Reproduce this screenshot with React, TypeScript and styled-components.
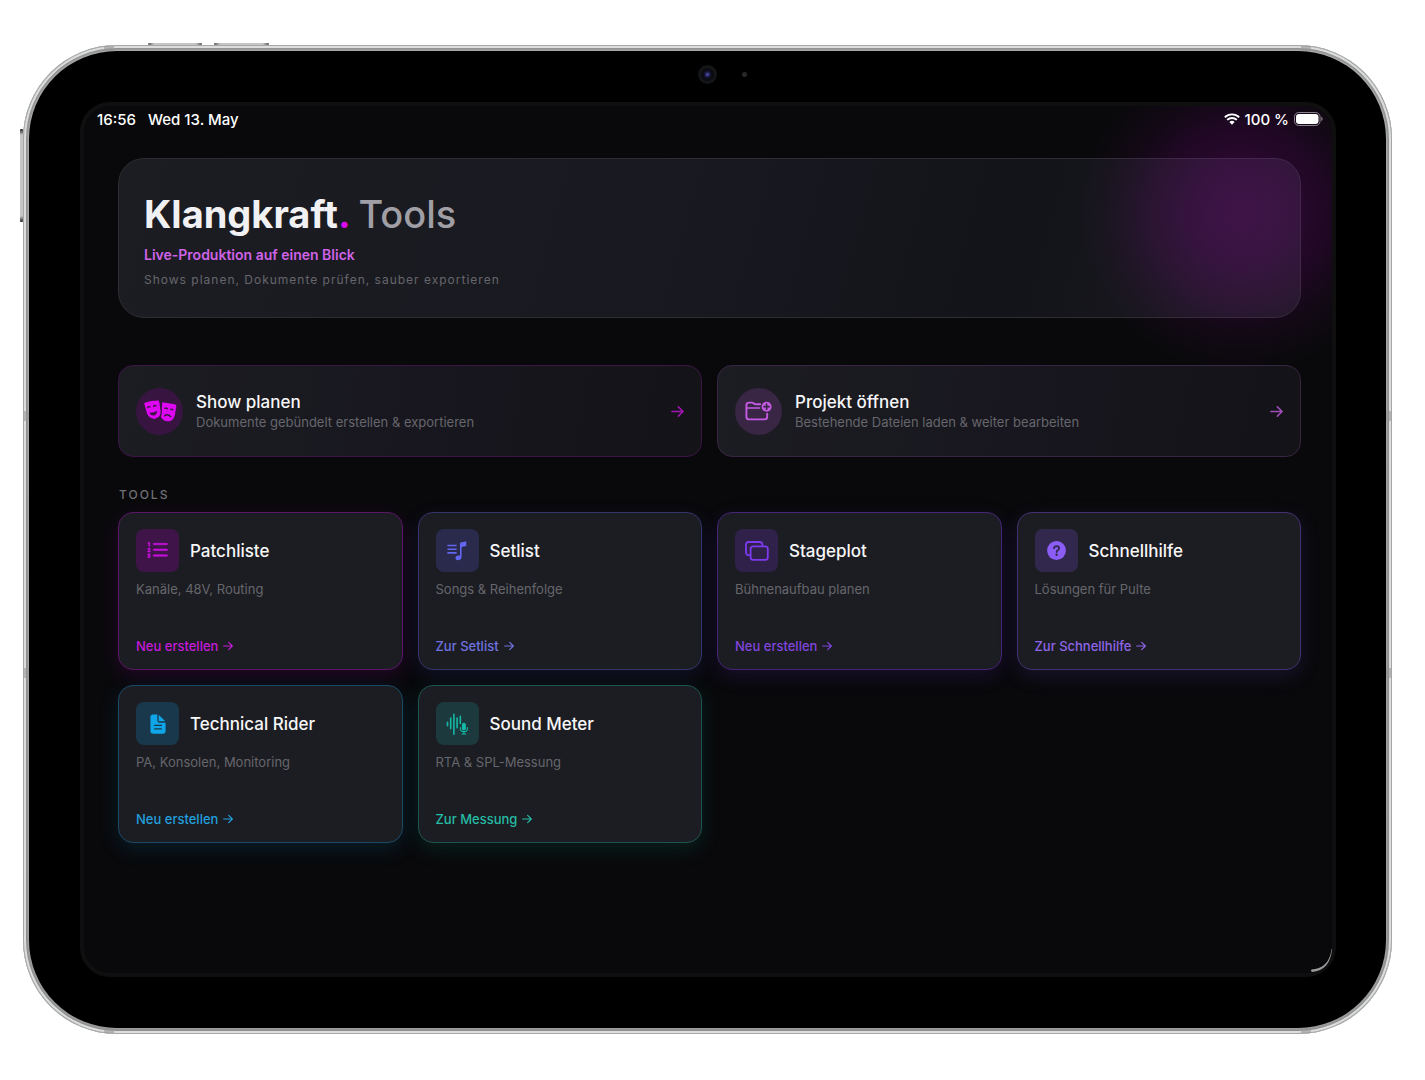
import React from "react";
import styled, { createGlobalStyle } from "styled-components";
import { BsListOl } from "react-icons/bs";
import { IoDocumentText } from "react-icons/io5";

const GlobalStyle = createGlobalStyle`
  *, *::before, *::after { box-sizing: border-box; }
  body { margin: 0; background: #fff; }
  h1, h2, h3, p { margin: 0; font-weight: inherit; }
`;

const Page = styled.div`
  min-height: 100vh;
  display: flex;
  padding: 45px 33px 46px 23px;
  font-family: Inter, "Liberation Sans", sans-serif;
  color: #fff;
`;

const Tablet = styled.div`
  position: relative;
  flex: 1;
  display: flex;
  padding: 6px;
  border-radius: 94px;
  background: linear-gradient(#b9b9b9, #a8a8a8);
  box-shadow:
    inset 0 0 0 1px #a5a7a7,
    inset 0 0 0 3px #dcdedd,
    inset 0 0 3px 5px #8c8c8c;
`;

const SideKey = styled.span<{ $x: number; $y: number; $w: number; $h: number }>`
  position: absolute;
  left: ${(p) => p.$x}px;
  top: ${(p) => p.$y}px;
  width: ${(p) => p.$w}px;
  height: ${(p) => p.$h}px;
  border-radius: 1px;
  background: ${(p) =>
    p.$w > p.$h
      ? "linear-gradient(90deg, #555, #c6c6c6 6px, #c6c6c6 calc(100% - 6px), #555)"
      : "linear-gradient(#222, #c6c6c6 6px, #c6c6c6 calc(100% - 6px), #222)"};
`;

const SeamH = styled.span<{ $edge: "top" | "bottom"; $side: "left" | "right" }>`
  position: absolute;
  ${(p) => p.$edge}: 1px;
  ${(p) => p.$side}: 81px;
  width: 10px;
  height: 5px;
  background: rgba(150, 150, 150, 0.6);
`;

const SeamV = styled.span<{ $side: "left" | "right"; $at: string }>`
  position: absolute;
  ${(p) => p.$side}: 1px;
  top: ${(p) => p.$at};
  width: 5px;
  height: 10px;
  background: rgba(150, 150, 150, 0.6);
`;

const Bezel = styled.div`
  position: relative;
  flex: 1;
  display: flex;
  padding: 51px 50px 51px 51px;
  border-radius: 88px;
  background: #000;
`;

const Camera = styled.span`
  position: absolute;
  top: 14px;
  left: 50%;
  width: 19px;
  height: 19px;
  margin-left: -10px;
  border-radius: 50%;
  background: radial-gradient(circle, #5a5ab0 0, #23235c 2px, #0b0b18 4px, #0c0d10 6px, #16181a 8px, #121314 9px);
`;

const Sensor = styled.span`
  position: absolute;
  top: 21px;
  left: 50%;
  width: 5px;
  height: 5px;
  margin-left: 34px;
  border-radius: 50%;
  background: #26282a;
`;

const Screen = styled.div`
  position: relative;
  flex: 1;
  display: flex;
  flex-direction: column;
  overflow: hidden;
  border: 4px solid #0f0f10;
  border-radius: 30px;
  background: #09090b;
`;

const Glow = styled.div`
  position: absolute;
  top: -53px;
  right: -68px;
  width: 320px;
  height: 320px;
  pointer-events: none;
  background: radial-gradient(
    circle closest-side,
    rgba(212, 0, 232, 0.2) 0,
    rgba(212, 0, 232, 0.17) 30%,
    rgba(212, 0, 232, 0.11) 54%,
    rgba(212, 0, 232, 0.04) 78%,
    rgba(212, 0, 232, 0) 100%
  );
`;

const StatusBar = styled.header`
  position: relative;
  z-index: 1;
  display: flex;
  justify-content: space-between;
  align-items: center;
  height: 26px;
  padding: 0 9px 0 13px;
  font-size: 15px;
  font-weight: 450;
`;

const StatusGroup = styled.div<{ $gap: number }>`
  display: flex;
  align-items: center;
  gap: ${(p) => p.$gap}px;
`;

const Content = styled.main`
  flex: 1;
  padding: 26px 31px 40px 34px;
`;

const Hero = styled.section`
  height: 160px;
  padding: 31px 25px 0;
  border: 1px solid #2d2d32;
  border-radius: 26px;
  background: linear-gradient(105deg, #1c1d22, #181820 50%, #131419 75%, #1b1a21);
`;

const HeroTitle = styled.h1`
  font-size: 38px;
  line-height: 48px;
  font-weight: 700;
  color: #f1f1f4;
`;

const Dot = styled.span`
  color: #d90bf0;
`;

const Thin = styled.span`
  font-weight: 500;
  color: #a09fa5;
`;

const Tagline = styled.p`
  margin-top: 6px;
  font-size: 14px;
  line-height: 22px;
  font-weight: 600;
  color: #cf63e8;
`;

const HeroNote = styled.p`
  margin-top: 4px;
  font-size: 12px;
  line-height: 20px;
  letter-spacing: 1px;
  color: #66666c;
`;

const QuickGrid = styled.section`
  display: grid;
  grid-template-columns: 1fr 1fr;
  gap: 15px;
  margin-top: 47px;
`;

const QuickCard = styled.button<{ $line: string }>`
  display: flex;
  align-items: center;
  gap: 13px;
  height: 92px;
  padding: 0 17px;
  border: 1px solid ${(p) => p.$line};
  border-radius: 15px;
  background: linear-gradient(100deg, #1c1d22, #18171f 50%, #131318);
  color: inherit;
  font: inherit;
  text-align: left;
`;

const RoundIcon = styled.span<{ $bg: string; $fg: string }>`
  flex: none;
  display: grid;
  place-items: center;
  width: 47px;
  height: 47px;
  border-radius: 50%;
  background: ${(p) => p.$bg};
  color: ${(p) => p.$fg};
`;

const QuickText = styled.span`
  flex: 1;
  display: flex;
  flex-direction: column;
`;

const CardTitle = styled.span`
  font-size: 17px;
  line-height: 22px;
  font-weight: 500;
  color: #f7f7f8;
`;

const Muted = styled.span`
  font-size: 13px;
  line-height: 18px;
  color: #66666c;
`;

const SectionLabel = styled.h2`
  margin: 28px 0 8px 1px;
  font-size: 12px;
  line-height: 19px;
  font-weight: 500;
  letter-spacing: 2px;
  color: #707075;
`;

const ToolGrid = styled.section`
  display: grid;
  grid-template-columns: repeat(4, 1fr);
  gap: 15px;
`;

const ToolCard = styled.article<{ $line: string; $glow: string }>`
  display: flex;
  flex-direction: column;
  height: 158px;
  padding: 16px 17px 13px;
  border: 1px solid ${(p) => p.$line};
  border-radius: 15px;
  background: #1c1d22;
  box-shadow: 0 6px 20px ${(p) => p.$glow};
`;

const ToolHead = styled.div`
  display: flex;
  align-items: center;
  gap: 11px;
  margin-bottom: 8px;
`;

const SquareIcon = styled.span<{ $bg: string; $fg: string }>`
  display: grid;
  place-items: center;
  width: 43px;
  height: 43px;
  border-radius: 8px;
  background: ${(p) => p.$bg};
  color: ${(p) => p.$fg};
`;

const ToolLink = styled.a<{ $fg: string }>`
  display: flex;
  align-items: center;
  gap: 5px;
  margin-top: auto;
  font-size: 13px;
  line-height: 20px;
  font-weight: 500;
  text-decoration: none;
  color: ${(p) => p.$fg};
`;

const CornerMark = styled.svg`
  position: absolute;
  right: 54px;
  bottom: 55px;
`;

const Arrow = ({ size = 10, color = "currentColor" }) => (
  <svg width={size} height={size} viewBox="0 0 12 12" fill="none" stroke={color} strokeWidth="1.4" strokeLinecap="round" strokeLinejoin="round" aria-hidden="true">
    <path d="M.8 6h10.2M6.8 1.7 11.2 6 6.8 10.3" />
  </svg>
);

const WifiIcon = () => (
  <svg width="16" height="12" viewBox="0 0 16 12" fill="none" stroke="#fff" strokeWidth="1.9" aria-label="WLAN">
    <path d="M.8 4.3a10.4 10.4 0 0 1 14.4 0M3.2 6.9a6.9 6.9 0 0 1 9.6 0" />
    <path d="M5.4 9a3.8 3.8 0 0 1 5.2 0L8 11.7z" fill="#fff" stroke="none" />
  </svg>
);

const BatteryIcon = () => (
  <svg width="29" height="14" viewBox="0 0 29 14" aria-label="Akku">
    <rect x=".5" y=".5" width="25.5" height="13" rx="4.2" fill="none" stroke="#8b818d" />
    <rect x="2" y="2" width="22.5" height="10" rx="3" fill="#fff" />
    <path d="M27.2 4.8c1.8.6 1.8 3.8 0 4.4z" fill="#8b818d" />
  </svg>
);

const MasksIcon = () => (
  <svg width="34" height="24" viewBox="0 0 34 24" fill="none" strokeLinecap="round">
    <path d="M19.300 3.200 31.800 5.200Q33.500 5.600 33.300 7.300L31.800 16.200Q30 23 24 22.200 19.500 21.500 18 18Z" fill="currentColor" />
    <path d="M22 9.300q1.200-.8 2.300.4M27.600 10.300q1.300-.6 2.200.6M21.600 16.800q3-2.600 6.200 1" stroke="#381540" strokeWidth="1.400" />
    <path d="M1.600 3.200Q8 .8 14.800.8 16.700.8 16.900 2.600L18.200 12.200Q18.500 18.600 12.800 20.100 6.800 21.300 3.800 15.600L.8 5.300Q.4 3.700 1.600 3.200Z" fill="currentColor" stroke="#381540" strokeWidth="1.200" />
    <path d="M4.600 8.600q.9-1.500 2.400-.7M10.500 7.300q1-1.400 2.500-.5" stroke="#381540" strokeWidth="1.400" />
    <path d="M6.200 13.600Q10.600 14.300 14 11.700 14 16 10.800 16.500 7.600 16.800 6.200 13.600Z" fill="#381540" />
  </svg>
);

const FolderPlusIcon = () => (
  <svg width="27" height="20" viewBox="0 0 27 20" fill="none" stroke="currentColor" strokeWidth="1.9" strokeLinecap="round" strokeLinejoin="round">
    <path d="M22.2 12.6v3.200q0 2.600-2.600 2.600H4q-2.600 0-2.600-2.600V4.200q0-2.600 2.600-2.600h2.800q1.200 0 2 .8.8.9 2 .9h4.400" />
    <path d="M2 7h12.600" strokeWidth="1.500" />
    <circle cx="21.600" cy="5.700" r="5" fill="currentColor" stroke="none" />
    <path d="M21.600 3.200v5M19.100 5.700h5" stroke="#392544" strokeWidth="1.700" />
  </svg>
);

const MusicListIcon = () => (
  <svg width="20" height="20" viewBox="0 0 20 20" fill="none" stroke="currentColor" strokeWidth="1.6" strokeLinecap="round">
    <path d="M1 4.500h8M1 8.200h8M1 11.900h8" />
    <path d="M13 16V2.600Q13 1.800 13.800 1.600L18.300.6Q19.300.4 19.300 1.300V4.300Q19.300 5 18.500 5.200L14.600 6V15.600Q14.600 19 11.200 19.300 8.400 19.400 8.400 17 8.400 15 11 14.600L13 14.200Z" fill="currentColor" stroke="none" />
  </svg>
);

const WindowsIcon = () => (
  <svg width="24" height="20" viewBox="0 0 24 20" fill="none" stroke="currentColor" strokeWidth="1.8" strokeLinejoin="round" strokeLinecap="round">
    <path d="M5 14.100H3.600Q1 14.100 1 11.500V3.600Q1 1 3.600 1h11.200q2.600 0 2.600 2.600v.7" />
    <rect x="5.600" y="5.400" width="17.200" height="13.400" rx="2.600" />
  </svg>
);

const HelpIcon = () => (
  <svg width="19" height="19" viewBox="0 0 19 19" fill="none">
    <circle cx="9.500" cy="9.500" r="9.400" fill="currentColor" />
    <path d="M7 7.300Q7.200 5.100 9.600 5.100 12.100 5.200 12.100 7.200 12.100 8.400 10.700 9.200 9.600 9.900 9.600 11" stroke="#32284e" strokeWidth="1.800" strokeLinecap="round" />
    <circle cx="9.600" cy="13.700" r="1.200" fill="#32284e" />
  </svg>
);

const WaveMicIcon = () => (
  <svg width="22" height="22" viewBox="0 0 22 22" fill="none" stroke="currentColor" strokeWidth="1.600" strokeLinecap="round">
    <path d="M1.500 9.200v3.600M4.700 5v10.600M7.900 1.200v20M11.100 5v9.800M14.300 3.400v7" />
    <rect x="15.900" y="9.800" width="4" height="7.600" rx="2" fill="currentColor" stroke="none" />
    <path d="M14.400 14.600v.8q0 3.200 3.500 3.200t3.500-3.200v-.8M17.900 18.800v2M16 21h3.800" strokeWidth="1.100" />
  </svg>
);

const tools = [
  { title: "Patchliste", desc: "Kanäle, 48V, Routing", action: "Neu erstellen", fg: "#c90fdd", link: "#c51ad8", bg: "#3f1549", line: "#5b1668", glow: "rgba(190, 10, 210, 0.14)", icon: <BsListOl size={23} stroke="currentColor" strokeWidth={0.4} /> },
  { title: "Setlist", desc: "Songs & Reihenfolge", action: "Zur Setlist", fg: "#6366f1", link: "#7072e0", bg: "#2a2a4d", line: "#35346d", glow: "rgba(80, 85, 240, 0.13)", icon: <MusicListIcon /> },
  { title: "Stageplot", desc: "Bühnenaufbau planen", action: "Neu erstellen", fg: "#7c3aed", link: "#8145de", bg: "#2f2149", line: "#452578", glow: "rgba(110, 45, 225, 0.15)", icon: <WindowsIcon /> },
  { title: "Schnellhilfe", desc: "Lösungen für Pulte", action: "Zur Schnellhilfe", fg: "#8b5cf6", link: "#8f65e8", bg: "#32284e", line: "#443173", glow: "rgba(120, 80, 235, 0.15)", icon: <HelpIcon /> },
  { title: "Technical Rider", desc: "PA, Konsolen, Monitoring", action: "Neu erstellen", fg: "#0ea5e9", link: "#229fdd", bg: "#1a384b", line: "#1b4a68", glow: "rgba(10, 130, 190, 0.17)", icon: <IoDocumentText size={22} /> },
  { title: "Sound Meter", desc: "RTA & SPL-Messung", action: "Zur Messung", fg: "#14b8a6", link: "#25bba4", bg: "#1c3a3d", line: "#1c5550", glow: "rgba(10, 150, 130, 0.17)", icon: <WaveMicIcon /> },
];

export default function App() {
  return (
    <Page>
      <GlobalStyle />
      <Tablet>
        <SideKey $x={125} $y={-2} $w={54} $h={2} />
        <SideKey $x={191} $y={-2} $w={55} $h={2} />
        <SideKey $x={-3} $y={84} $w={3} $h={93} />
        <SeamH $edge="top" $side="left" />
        <SeamH $edge="top" $side="right" />
        <SeamH $edge="bottom" $side="left" />
        <SeamH $edge="bottom" $side="right" />
        <SeamV $side="left" $at="37%" />
        <SeamV $side="right" $at="37%" />
        <SeamV $side="left" $at="63%" />
        <SeamV $side="right" $at="63%" />
        <Bezel>
          <Camera />
          <Sensor />
          <Screen>
            <StatusBar>
              <StatusGroup $gap={12}>
                <span>16:56</span>
                <span>Wed 13. May</span>
              </StatusGroup>
              <StatusGroup $gap={5}>
                <WifiIcon />
                <span>100 %</span>
                <BatteryIcon />
              </StatusGroup>
            </StatusBar>
            <Content>
              <Hero>
                <HeroTitle>
                  Klangkraft<Dot>.</Dot> <Thin>Tools</Thin>
                </HeroTitle>
                <Tagline>Live-Produktion auf einen Blick</Tagline>
                <HeroNote>Shows planen, Dokumente prüfen, sauber exportieren</HeroNote>
              </Hero>
              <QuickGrid>
                <QuickCard type="button" $line="#3c1446">
                  <RoundIcon $bg="#381540" $fg="#df08f5">
                    <MasksIcon />
                  </RoundIcon>
                  <QuickText>
                    <CardTitle>Show planen</CardTitle>
                    <Muted>Dokumente gebündelt erstellen &amp; exportieren</Muted>
                  </QuickText>
                  <Arrow size={13} color="#a314b4" />
                </QuickCard>
                <QuickCard type="button" $line="#382543">
                  <RoundIcon $bg="#392544" $fg="#c55be4">
                    <FolderPlusIcon />
                  </RoundIcon>
                  <QuickText>
                    <CardTitle>Projekt öffnen</CardTitle>
                    <Muted>Bestehende Dateien laden &amp; weiter bearbeiten</Muted>
                  </QuickText>
                  <Arrow size={13} color="#a14cbb" />
                </QuickCard>
              </QuickGrid>
              <SectionLabel>TOOLS</SectionLabel>
              <ToolGrid>
                {tools.map((t) => (
                  <ToolCard key={t.title} $line={t.line} $glow={t.glow}>
                    <ToolHead>
                      <SquareIcon $bg={t.bg} $fg={t.fg}>{t.icon}</SquareIcon>
                      <CardTitle as="h3">{t.title}</CardTitle>
                    </ToolHead>
                    <Muted>{t.desc}</Muted>
                    <ToolLink href="#" $fg={t.link}>
                      {t.action}
                      <Arrow />
                    </ToolLink>
                  </ToolCard>
                ))}
              </ToolGrid>
            </Content>
            <Glow />
          </Screen>
          <CornerMark width="22" height="24" viewBox="0 0 22 24" aria-hidden="true">
            <path d="M22 0C21 14 14 22 2 23Q0 21.800 1.500 20.500C12 20 20 14 21.500 0Z" fill="#9b9b9b" />
          </CornerMark>
        </Bezel>
      </Tablet>
    </Page>
  );
}
